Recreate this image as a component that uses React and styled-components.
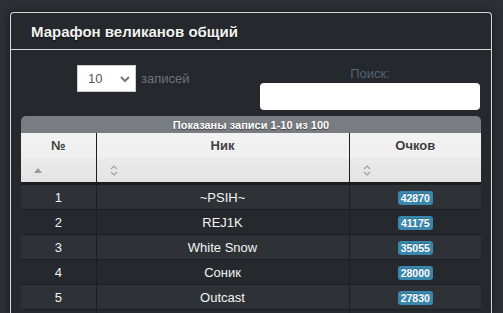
import styled, { createGlobalStyle } from "styled-components";

const GlobalStyle = createGlobalStyle`
    html, body {
        margin: 0;
        padding: 0;
        background-color: #2c2f34;
        font-family: "Liberation Sans", Arial, sans-serif;
        overflow: hidden;
    }
`;

const Page = styled.div`
    padding: 12px 11px 0 10px;
    height: 313px;
    box-sizing: border-box;
`;

const Panel = styled.section`
    border: 1px solid #d8d8d8;
    border-bottom: none;
    border-radius: 4px 4px 0 0;
    background-color: #25282d;
    box-shadow: 0 0 7px rgba(0, 0, 0, 0.55);
    height: 100%;
    box-sizing: border-box;
    overflow: hidden;
`;

const PanelHeader = styled.header`
    height: 36px;
    display: flex;
    align-items: center;
    padding-left: 20px;
    border-bottom: 1px solid #d8d8d8;
`;

const Title = styled.h1`
    margin: 0;
    font-size: 15px;
    font-weight: bold;
    color: #f2f2f2;
    text-shadow: 0 1px 1px rgba(0, 0, 0, 0.6);
`;

const PanelBody = styled.div`
    padding: 15px 10px 0 10px;
`;

const Controls = styled.div`
    display: flex;
    margin-bottom: 6px;
`;

const Half = styled.div`
    flex: 1;
    display: flex;
    justify-content: ${(p) => p.$justify || "flex-start"};
    align-items: flex-start;
`;

const LengthBox = styled.label`
    display: flex;
    align-items: center;
    gap: 5px;
    font-size: 13px;
    color: #6e747b;
    margin-left: 56px;
`;

const Select = styled.div`
    width: 59px;
    height: 27px;
    box-sizing: border-box;
    background: #fff;
    border: 1px solid #ccc;
    display: flex;
    align-items: center;
    justify-content: space-between;
    padding: 0 5px 0 10px;
    font-size: 13px;
    color: #555;
`;

const SearchBox = styled.div`
    width: 220px;
    margin-right: 1px;
    display: flex;
    flex-direction: column;
    align-items: center;
    font-size: 13px;
    color: #52647a;
    padding-top: 1px;
`;

const SearchInput = styled.div`
    align-self: stretch;
    height: 27px;
    margin-top: 2px;
    background: #fff;
    border-radius: 4px;
`;

const Caption = styled.div`
    height: 17px;
    background-color: #797d82;
    border-radius: 5px 5px 0 0;
    display: flex;
    align-items: center;
    justify-content: center;
    font-size: 11px;
    font-weight: bold;
    color: #fff;
    text-shadow: 0 1px 1px rgba(0, 0, 0, 0.5);
`;

const Table = styled.table`
    width: 100%;
    border-collapse: collapse;
    table-layout: fixed;
`;

const HeadCell = styled.th`
    background: linear-gradient(#f2f2f2, #ececec);
    border-left: 1px solid #1c1f22;
    border-right: 1px solid #1c1f22;
    padding: 0;
    vertical-align: top;
    &:first-child {
        border-left: none;
    }
    &:last-child {
        border-right: none;
    }
`;

const HeadTitle = styled.div`
    height: 25px;
    display: flex;
    align-items: center;
    justify-content: center;
    font-size: 13px;
    font-weight: bold;
    color: #3d3d3d;
    text-shadow: 0 1px 0 #fff;
`;

const SortRow = styled.div`
    height: 26px;
    display: flex;
    align-items: center;
    padding-left: 13px;
    background: linear-gradient(#ebebeb, #e3e3e3);
    border-bottom: 2px solid #1c1f22;
    box-sizing: border-box;
`;

const Row = styled.tr`
    background-color: ${(p) => (p.$odd ? "#2e3136" : "#25282c")};
`;

const Cell = styled.td`
    height: 24px;
    padding: 0;
    border: 1px solid #1c1f22;
    text-align: center;
    font-size: 13px;
    color: #f4f4f4;
    &:first-child {
        border-left: none;
    }
    &:last-child {
        border-right: none;
    }
`;

const Badge = styled.span`
    display: inline-block;
    padding: 1px 3px;
    border-radius: 3px;
    background-color: #3a87ad;
    color: #fff;
    font-size: 10.5px;
    font-weight: bold;
    line-height: 12px;
    text-shadow: 0 -1px 0 rgba(0, 0, 0, 0.25);
    vertical-align: middle;
`;

const Chevron = () => (
    <svg width="10" height="8" viewBox="0 0 10 8">
        <path d="M1 2 L5 6 L9 2" fill="none" stroke="#777" strokeWidth="2" />
    </svg>
);

const SortAsc = () => (
    <svg width="8" height="5" viewBox="0 0 8 5">
        <path d="M0 5 L4 0 L8 5 Z" fill="#9a9a9a" />
    </svg>
);

const SortBoth = () => (
    <svg width="8" height="11" viewBox="0 0 8 11">
        <path d="M1 4 L4 1 L7 4 M1 7 L4 10 L7 7" fill="none" stroke="#a0a0a0" strokeWidth="1.2" />
    </svg>
);

const players = [
    { id: 1, nick: "~PSIH~", score: 42870 },
    { id: 2, nick: "REJ1K", score: 41175 },
    { id: 3, nick: "White Snow", score: 35055 },
    { id: 4, nick: "Соник", score: 28000 },
    { id: 5, nick: "Outcast", score: 27830 },
    { id: 6, nick: "", score: 0 },
];

const App = () => (
    <>
        <GlobalStyle />
        <Page>
            <Panel>
                <PanelHeader>
                    <Title>Марафон великанов общий</Title>
                </PanelHeader>
                <PanelBody>
                    <Controls>
                        <Half>
                            <LengthBox>
                                <Select>
                                    10
                                    <Chevron />
                                </Select>
                                записей
                            </LengthBox>
                        </Half>
                        <Half $justify="flex-end">
                            <SearchBox>
                                Поиск:
                                <SearchInput />
                            </SearchBox>
                        </Half>
                    </Controls>
                    <Caption>Показаны записи 1-10 из 100</Caption>
                    <Table>
                        <colgroup>
                            <col style={{ width: "75px" }} />
                            <col style={{ width: "253px" }} />
                            <col />
                        </colgroup>
                        <thead>
                            <tr>
                                <HeadCell>
                                    <HeadTitle>№</HeadTitle>
                                    <SortRow>
                                        <SortAsc />
                                    </SortRow>
                                </HeadCell>
                                <HeadCell>
                                    <HeadTitle>Ник</HeadTitle>
                                    <SortRow>
                                        <SortBoth />
                                    </SortRow>
                                </HeadCell>
                                <HeadCell>
                                    <HeadTitle>Очков</HeadTitle>
                                    <SortRow>
                                        <SortBoth />
                                    </SortRow>
                                </HeadCell>
                            </tr>
                        </thead>
                        <tbody>
                            {players.map((p, i) => (
                                <Row key={p.id} $odd={i % 2 === 0}>
                                    <Cell>{p.nick ? p.id : ""}</Cell>
                                    <Cell>{p.nick}</Cell>
                                    <Cell>{p.nick ? <Badge>{p.score}</Badge> : ""}</Cell>
                                </Row>
                            ))}
                        </tbody>
                    </Table>
                </PanelBody>
            </Panel>
        </Page>
    </>
);

export default App;
